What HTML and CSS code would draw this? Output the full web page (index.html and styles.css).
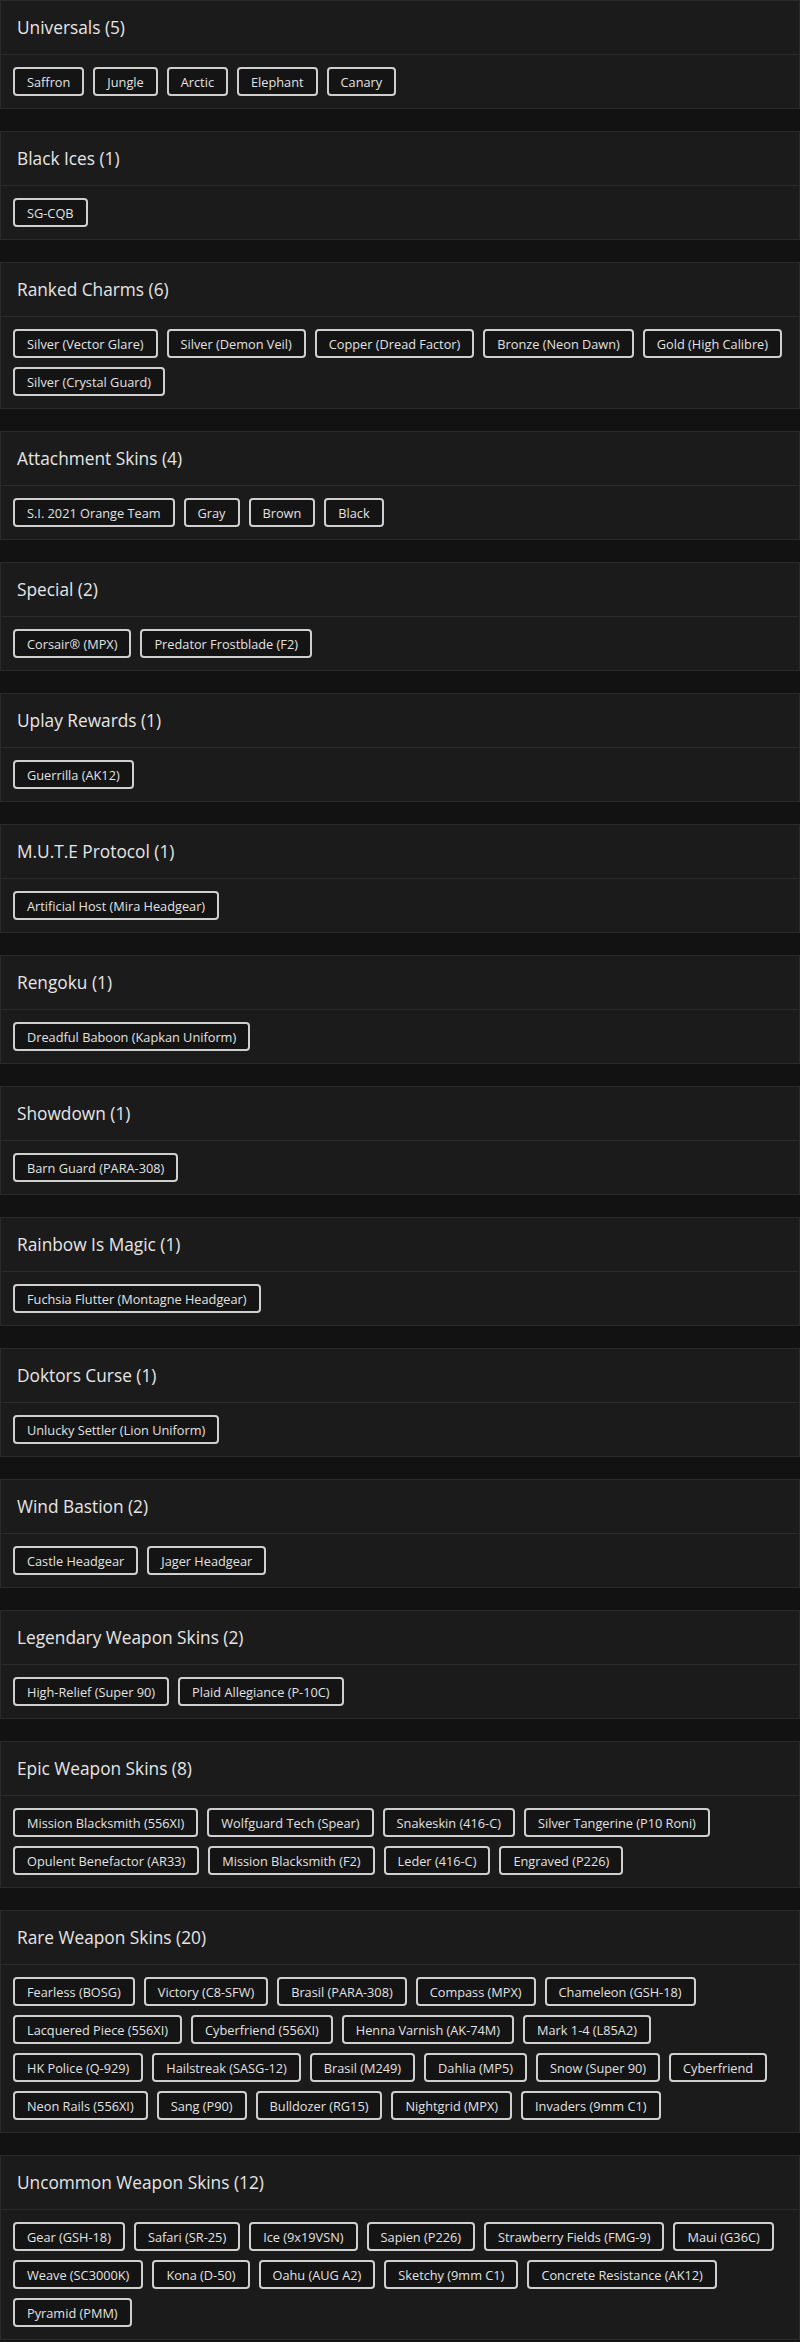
FILE: index.html
```html
<!DOCTYPE html>
<html lang="en">
<head>
<meta charset="utf-8">
<title>Items</title>
<link rel="stylesheet" href="styles.css">
</head>
<body>
<main class="list">
  <section class="card">
    <h2 class="card-header">Universals (5)</h2>
    <div class="card-body">
      <span class="tag">Saffron</span><span class="tag">Jungle</span><span class="tag">Arctic</span><span class="tag">Elephant</span><span class="tag">Canary</span>
    </div>
  </section>
  <section class="card">
    <h2 class="card-header">Black Ices (1)</h2>
    <div class="card-body">
      <span class="tag">SG-CQB</span>
    </div>
  </section>
  <section class="card">
    <h2 class="card-header">Ranked Charms (6)</h2>
    <div class="card-body">
      <span class="tag">Silver (Vector Glare)</span><span class="tag">Silver (Demon Veil)</span><span class="tag">Copper (Dread Factor)</span><span class="tag">Bronze (Neon Dawn)</span><span class="tag">Gold (High Calibre)</span><span class="tag">Silver (Crystal Guard)</span>
    </div>
  </section>
  <section class="card">
    <h2 class="card-header">Attachment Skins (4)</h2>
    <div class="card-body">
      <span class="tag">S.I. 2021 Orange Team</span><span class="tag">Gray</span><span class="tag">Brown</span><span class="tag">Black</span>
    </div>
  </section>
  <section class="card">
    <h2 class="card-header">Special (2)</h2>
    <div class="card-body">
      <span class="tag">Corsair® (MPX)</span><span class="tag">Predator Frostblade (F2)</span>
    </div>
  </section>
  <section class="card">
    <h2 class="card-header">Uplay Rewards (1)</h2>
    <div class="card-body">
      <span class="tag">Guerrilla (AK12)</span>
    </div>
  </section>
  <section class="card">
    <h2 class="card-header">M.U.T.E Protocol (1)</h2>
    <div class="card-body">
      <span class="tag">Artificial Host (Mira Headgear)</span>
    </div>
  </section>
  <section class="card">
    <h2 class="card-header">Rengoku (1)</h2>
    <div class="card-body">
      <span class="tag">Dreadful Baboon (Kapkan Uniform)</span>
    </div>
  </section>
  <section class="card">
    <h2 class="card-header">Showdown (1)</h2>
    <div class="card-body">
      <span class="tag">Barn Guard (PARA-308)</span>
    </div>
  </section>
  <section class="card">
    <h2 class="card-header">Rainbow Is Magic (1)</h2>
    <div class="card-body">
      <span class="tag">Fuchsia Flutter (Montagne Headgear)</span>
    </div>
  </section>
  <section class="card">
    <h2 class="card-header">Doktors Curse (1)</h2>
    <div class="card-body">
      <span class="tag">Unlucky Settler (Lion Uniform)</span>
    </div>
  </section>
  <section class="card">
    <h2 class="card-header">Wind Bastion (2)</h2>
    <div class="card-body">
      <span class="tag">Castle Headgear</span><span class="tag">Jager Headgear</span>
    </div>
  </section>
  <section class="card">
    <h2 class="card-header">Legendary Weapon Skins (2)</h2>
    <div class="card-body">
      <span class="tag">High-Relief (Super 90)</span><span class="tag">Plaid Allegiance (P-10C)</span>
    </div>
  </section>
  <section class="card">
    <h2 class="card-header">Epic Weapon Skins (8)</h2>
    <div class="card-body">
      <span class="tag">Mission Blacksmith (556XI)</span><span class="tag">Wolfguard Tech (Spear)</span><span class="tag">Snakeskin (416-C)</span><span class="tag">Silver Tangerine (P10 Roni)</span><span class="tag">Opulent Benefactor (AR33)</span><span class="tag">Mission Blacksmith (F2)</span><span class="tag">Leder (416-C)</span><span class="tag">Engraved (P226)</span>
    </div>
  </section>
  <section class="card">
    <h2 class="card-header">Rare Weapon Skins (20)</h2>
    <div class="card-body">
      <span class="tag">Fearless (BOSG)</span><span class="tag">Victory (C8-SFW)</span><span class="tag">Brasil (PARA-308)</span><span class="tag">Compass (MPX)</span><span class="tag">Chameleon (GSH-18)</span><span class="tag">Lacquered Piece (556XI)</span><span class="tag">Cyberfriend (556XI)</span><span class="tag">Henna Varnish (AK-74M)</span><span class="tag">Mark 1-4 (L85A2)</span><span class="tag">HK Police (Q-929)</span><span class="tag">Hailstreak (SASG-12)</span><span class="tag">Brasil (M249)</span><span class="tag">Dahlia (MP5)</span><span class="tag">Snow (Super 90)</span><span class="tag">Cyberfriend</span><span class="tag">Neon Rails (556XI)</span><span class="tag">Sang (P90)</span><span class="tag">Bulldozer (RG15)</span><span class="tag">Nightgrid (MPX)</span><span class="tag">Invaders (9mm C1)</span>
    </div>
  </section>
  <section class="card">
    <h2 class="card-header">Uncommon Weapon Skins (12)</h2>
    <div class="card-body">
      <span class="tag">Gear (GSH-18)</span><span class="tag">Safari (SR-25)</span><span class="tag">Ice (9x19VSN)</span><span class="tag">Sapien (P226)</span><span class="tag">Strawberry Fields (FMG-9)</span><span class="tag">Maui (G36C)</span><span class="tag">Weave (SC3000K)</span><span class="tag">Kona (D-50)</span><span class="tag">Oahu (AUG A2)</span><span class="tag">Sketchy (9mm C1)</span><span class="tag">Concrete Resistance (AK12)</span><span class="tag">Pyramid (PMM)</span>
    </div>
  </section>
</main>
</body>
</html>
```

FILE: styles.css
```css
html, body {
  margin: 0;
  padding: 0;
  background: #121212;
}

body {
  font-family: "Open Sans", "Liberation Sans", sans-serif;
  color: #e4e4e4;
}

.list {
  display: flex;
  flex-direction: column;
  gap: 22px;
}

.card {
  background: #1b1b1b;
  border: 1px solid #2a2a2a;
}

.card-header {
  margin: 0;
  height: 53px;
  display: flex;
  align-items: center;
  padding: 0 16px;
  border-bottom: 1px solid #2c2c2c;
  font-size: 17.3px;
  font-weight: 400;
  color: #e6e6e6;
}

.card-body {
  display: flex;
  flex-wrap: wrap;
  gap: 9px;
  padding: 12px 10px 12px 12px;
}

.tag {
  box-sizing: border-box;
  height: 29px;
  display: inline-flex;
  align-items: center;
  padding: 0 12px;
  border: 2px solid #cfcfcf;
  border-radius: 4px;
  background: #141414;
  font-size: 12.75px;
  color: #e2e2e2;
  white-space: nowrap;
}
```
